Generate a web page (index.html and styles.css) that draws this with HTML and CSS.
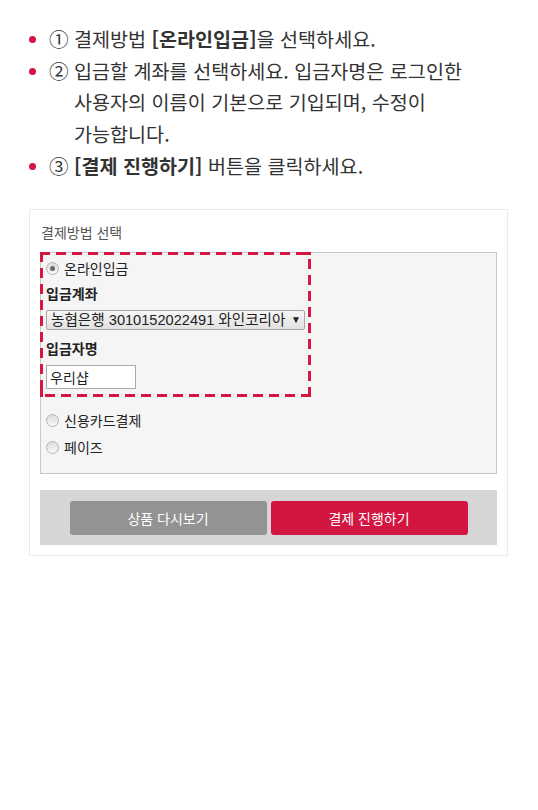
FILE: index.html
```html
<!DOCTYPE html>
<html lang="ko">
<head>
    <meta charset="UTF-8">
    <meta name="viewport" content="width=device-width, initial-scale=1.0">
    <title>결제방법 안내</title>
    <link rel="stylesheet" href="styles.css">
</head>
<body>
    <ul class="guide">
        <li>
            <span class="num">①</span>
            <span class="txt">결제방법 <b>[온라인입금]</b>을 선택하세요.</span>
        </li>
        <li>
            <span class="num">②</span>
            <span class="txt">입금할 계좌를 선택하세요. 입금자명은 로그인한<br>사용자의 이름이 기본으로 기입되며, 수정이<br>가능합니다.</span>
        </li>
        <li>
            <span class="num">③</span>
            <span class="txt"><b>[결제 진행하기]</b> 버튼을 클릭하세요.</span>
        </li>
    </ul>

    <div class="pay-card">
        <h3 class="pay-title">결제방법 선택</h3>
        <div class="pay-box">
            <div class="highlight">
                <label class="radio-row">
                    <span class="radio checked"></span>온라인입금
                </label>
                <div class="field-label">입금계좌</div>
                <div class="select-box">
                    <span>농협은행 3010152022491 와인코리아</span>
                    <span class="arrow">▼</span>
                </div>
                <div class="field-label second">입금자명</div>
                <input type="text" class="name-input" value="우리샵">
            </div>
            <label class="radio-row first">
                <span class="radio"></span>신용카드결제
            </label>
            <label class="radio-row">
                <span class="radio"></span>페이즈
            </label>
        </div>
        <div class="btn-bar">
            <button class="btn btn-gray">상품 다시보기</button>
            <button class="btn btn-red">결제 진행하기</button>
        </div>
    </div>
</body>
</html>
```

FILE: styles.css
```css
body {
    margin: 0;
    background: #fff;
    font-family: "Noto Sans CJK KR", "Noto Sans", sans-serif;
}
.guide {
    list-style: none;
    margin: 23px 0 0 0;
    padding: 0 0 0 29px;
    font-size: 19.6px;
    line-height: 31.7px;
    color: #333;
}
.guide li {
    display: flex;
}
.guide li::before {
    content: "";
    width: 7px;
    height: 7px;
    border-radius: 50%;
    background: #d31641;
    margin: 13px 13px 0 0;
    flex: none;
}
.guide .num {
    width: 25px;
    flex: none;
}
.guide b {
    font-weight: bold;
}
.pay-card {
    width: 457px;
    margin: 27px 0 0 29px;
    padding: 13px 10px 10px 10px;
    border: 1px solid #ebebeb;
    font-family: "Liberation Sans", "Noto Sans CJK KR", sans-serif;
    font-size: 14px;
    color: #222;
}
.pay-title {
    margin: 0 0 9px 1px;
    font-size: 14px;
    font-weight: normal;
    line-height: 20px;
    color: #555;
}
.pay-box {
    background: #f5f5f5;
    border: 1px solid #c8c8c8;
    padding: 0 0 15px 0;
}
/* dashed outline drawn with gradients so the dashes are longer than chrome's */
.highlight {
    width: 265px;
    margin: -1px 0 0 -1px;
    padding: 7px 0 8px 6px;
    background:
        repeating-linear-gradient(90deg, #d8173f 0 10px, transparent 10px 16px) top left / 100% 3px no-repeat,
        repeating-linear-gradient(270deg, #d8173f 0 10px, transparent 10px 16px) bottom left / 100% 3px no-repeat,
        repeating-linear-gradient(180deg, #d8173f 0 10px, transparent 10px 16px) top left / 3px 100% no-repeat,
        repeating-linear-gradient(0deg, #d8173f 0 10px, transparent 10px 16px) top right / 3px 100% no-repeat,
        linear-gradient(#d8173f, #d8173f) top right / 8px 3px no-repeat,
        linear-gradient(#d8173f, #d8173f) bottom left / 3px 8px no-repeat;
}
.radio-row {
    display: flex;
    align-items: center;
    height: 20px;
    line-height: 20px;
}
.pay-box > .radio-row {
    margin-top: 7px;
    padding-left: 5px;
}
.pay-box > .radio-row.first {
    margin-top: 14px;
}
.radio {
    width: 11px;
    height: 11px;
    border-radius: 50%;
    border: 1px solid #b5b5b5;
    background: linear-gradient(#dcdcdc, #f8f8f8);
    margin-right: 5px;
    position: relative;
    flex: none;
}
.radio.checked::after {
    content: "";
    position: absolute;
    left: 3px;
    top: 3px;
    width: 5px;
    height: 5px;
    border-radius: 50%;
    background: #6a6a6a;
}
.field-label {
    font-weight: bold;
    line-height: 20px;
    margin: 5px 0 0 0;
}
.field-label.second {
    margin-top: 9px;
}
.select-box {
    display: flex;
    justify-content: space-between;
    align-items: center;
    width: 253px;
    height: 18px;
    margin-top: 6px;
    padding: 0 0 0 4px;
    border: 1px solid #a6a6a6;
    border-radius: 2px;
    background: linear-gradient(#f6f6f6, #e2e2e2);
    font-size: 14.6px;
    line-height: 18px;
    color: #222;
}
.select-box .arrow {
    font-size: 10px;
    width: 16px;
    text-align: center;
    color: #222;
}
.name-input {
    display: block;
    width: 90px;
    height: 24px;
    margin-top: 6px;
    padding: 0 3px;
    box-sizing: border-box;
    border: 1px solid #a9a9a9;
    background: #fff;
    font-family: "Noto Sans CJK KR", sans-serif;
    font-size: 14px;
    color: #222;
}
.btn-bar {
    display: flex;
    justify-content: center;
    gap: 4px;
    margin-top: 16px;
    padding: 11px 0 10px 0;
    background: #d6d6d6;
}
.btn {
    width: 197px;
    height: 34px;
    border: 0;
    border-radius: 3px;
    font-family: "Noto Sans CJK KR", sans-serif;
    font-size: 14px;
    color: #fff;
}
.btn-gray {
    background: #939393;
}
.btn-red {
    background: #d31641;
}
```
